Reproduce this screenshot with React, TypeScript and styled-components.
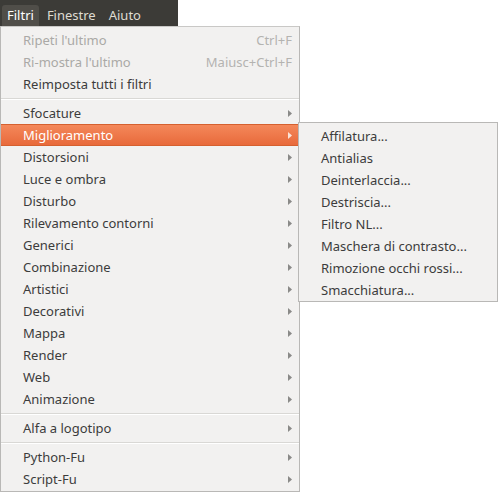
import styled, { createGlobalStyle } from "styled-components"

const GlobalStyle = createGlobalStyle`
  html, body {
    margin: 0;
    background: #ffffff;
  }
  body {
    font-family: "Noto Sans", "Open Sans", sans-serif;
    font-size: 13px;
  }
`;

interface Item {
  label: string;
  shortcut?: string;
  disabled?: boolean;
  submenu?: boolean;
  active?: boolean;
}

const filterGroups: Item[][] = [
  [
    { label: "Ripeti l'ultimo", shortcut: "Ctrl+F", disabled: true },
    { label: "Ri-mostra l'ultimo", shortcut: "Maiusc+Ctrl+F", disabled: true },
    { label: "Reimposta tutti i filtri" },
  ],
  [
    { label: "Sfocature", submenu: true },
    { label: "Miglioramento", submenu: true, active: true },
    { label: "Distorsioni", submenu: true },
    { label: "Luce e ombra", submenu: true },
    { label: "Disturbo", submenu: true },
    { label: "Rilevamento contorni", submenu: true },
    { label: "Generici", submenu: true },
    { label: "Combinazione", submenu: true },
    { label: "Artistici", submenu: true },
    { label: "Decorativi", submenu: true },
    { label: "Mappa", submenu: true },
    { label: "Render", submenu: true },
    { label: "Web", submenu: true },
    { label: "Animazione", submenu: true },
  ],
  [{ label: "Alfa a logotipo", submenu: true }],
  [
    { label: "Python-Fu", submenu: true },
    { label: "Script-Fu", submenu: true },
  ],
];

const enhanceItems = [
  "Affilatura...",
  "Antialias",
  "Deinterlaccia...",
  "Destriscia...",
  "Filtro NL...",
  "Maschera di contrasto...",
  "Rimozione occhi rossi...",
  "Smacchiatura...",
];

function Arrow({ light }: { light?: boolean }) {
  return (
    <svg width="4" height="7" viewBox="0 0 4 7">
      <path d="M0 0 L4 3.5 L0 7 Z" fill={light ? "#fbe3d8" : "#8a8a88"} />
    </svg>
  );
}

export default function App() {
  return (
    <Page>
      <GlobalStyle />
      <MenuBar>
        <MenuTitle open>Filtri</MenuTitle>
        <MenuTitle>Finestre</MenuTitle>
        <MenuTitle>Aiuto</MenuTitle>
      </MenuBar>

      <Dropdown>
        {filterGroups.map((group, i) => (
          <div key={i}>
            {i > 0 && <Separator />}
            {group.map((item) => (
              <Row key={item.label} active={item.active} disabled={item.disabled}>
                <span>{item.label}</span>
                {item.shortcut && <Shortcut>{item.shortcut}</Shortcut>}
                {item.submenu && <Arrow light={item.active} />}
              </Row>
            ))}
          </div>
        ))}
      </Dropdown>

      <SubMenu>
        {enhanceItems.map((label) => (
          <Row key={label}>
            <span>{label}</span>
          </Row>
        ))}
      </SubMenu>
    </Page>
  );
}

const Page = styled.div`
  position: relative;
  width: 498px;
  height: 493px;
  overflow: hidden;
`;

const MenuBar = styled.div`
  display: flex;
  align-items: flex-end;
  width: 176px;
  height: 26px;
  padding-left: 2px;
  background: #3c3b37;
`;

const MenuTitle = styled.div<{ open?: boolean }>`
  height: 21px;
  line-height: 21px;
  padding: 0 5px;
  margin-right: 3px;
  color: ${props => props.open ? "#ffffff" : "#dfdbd2"};
  background: ${props => props.open ? "#504e49" : "transparent"};
  border-radius: 3px 3px 0 0;
`;

const Dropdown = styled.div`
  position: absolute;
  left: 0;
  top: 26px;
  width: 298px;
  padding: 2px 0 1px;
  background: #f2f1f0;
  border: 1px solid #b9b8b6;
  border-top-color: #c9c8c6;
`;

const SubMenu = styled.div`
  position: absolute;
  left: 298px;
  top: 122px;
  width: 198px;
  padding: 2px 0 0;
  background: #f2f1f0;
  border: 1px solid #b9b8b6;
`;

const Row = styled.div<{ active?: boolean; disabled?: boolean }>`
  display: flex;
  align-items: center;
  justify-content: space-between;
  height: 22px;
  box-sizing: border-box;
  padding: 0 7px 0 22px;
  white-space: nowrap;
  color: ${props => props.active ? "#ffffff" : props.disabled ? "#aaa9a6" : "#3c3c3c"};
  background: ${props => props.active ? "linear-gradient(#f4885a, #e86a3b)" : "transparent"};
  border: 1px solid ${props => props.active ? "#d5602f" : "transparent"};
  border-left: 0;
  border-right: 0;
`;

const Shortcut = styled.span`
  color: #b4b3b0;
`;

const Separator = styled.div`
  height: 7px;
  box-sizing: border-box;
  padding-top: 3px;

  &::before {
    content: "";
    display: block;
    height: 1px;
    background: #d9d8d5;
    border-bottom: 1px solid #ffffff;
  }
`;
